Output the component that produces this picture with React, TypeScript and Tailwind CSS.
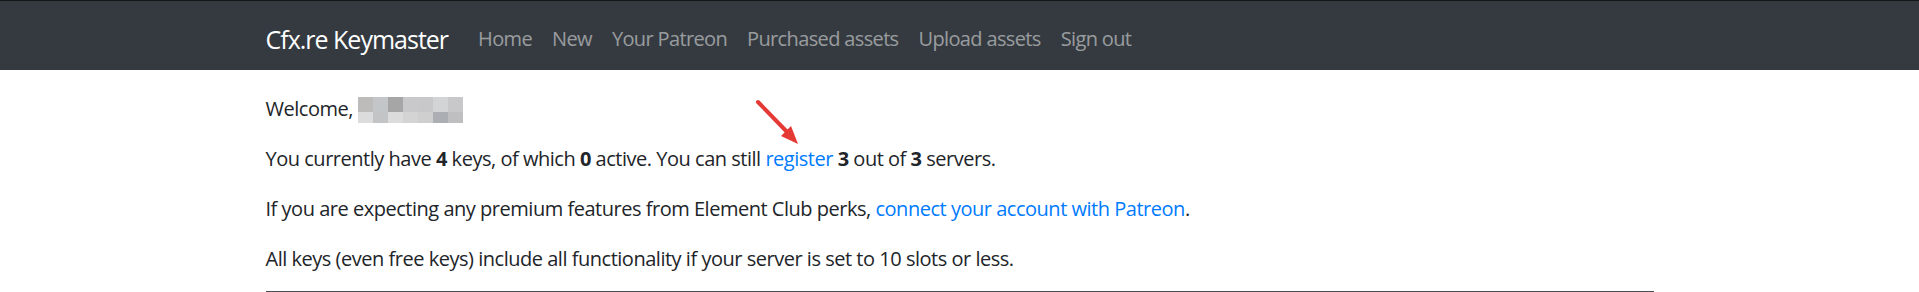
const navLinks = ['Home', 'New', 'Your Patreon', 'Purchased assets', 'Upload assets', 'Sign out']

// pixelated name block (2 rows x 7 cells)
const mosaicTop = ['bg-[#bdbcbb]', 'bg-[#c3c6c9]', 'bg-[#a6a6a6]', 'bg-[#c9c9cb]', 'bg-[#c8c8ca]', 'bg-[#d3d4d6]', 'bg-[#c8c8ca]']
const mosaicBottom = ['bg-[#dcdcdc]', 'bg-[#c2c4c6]', 'bg-[#dcdcdc]', 'bg-[#d4d4d4]', 'bg-[#cfcfcf]', 'bg-[#abaeb2]', 'bg-[#bfbfc1]']

function RedactedName() {
  return (
    <span className="inline-block relative w-[105px] h-px">
      <span className="absolute left-0 top-[-18px] flex flex-col w-[105px]">
        <span className="flex h-[15px]">
          {mosaicTop.map((c, i) => (
            <span key={i} className={`w-[15px] h-full ${c}`} />
          ))}
        </span>
        <span className="flex h-[11px]">
          {mosaicBottom.map((c, i) => (
            <span key={i} className={`w-[15px] h-full ${c}`} />
          ))}
        </span>
      </span>
    </span>
  )
}

export default function App() {
  return (
    <div className="relative min-h-[292px] bg-white text-[#212529] font-['Open_Sans',sans-serif] tracking-[-0.03em] overflow-hidden">
      {/* Navbar */}
      <nav className="h-[70px] bg-[#343a40] border-t border-[#141618]">
        <div className="w-[1388px] mx-auto h-full pt-[8px] flex items-center">
          <a className="text-[25px] text-white mr-5 leading-none tracking-[-0.04em]">Cfx.re Keymaster</a>
          <ul className="flex items-center tracking-[-0.04em]">
            {navLinks.map((l) => (
              <li key={l}>
                <a className="px-[10px] text-[20px] text-white/50 leading-none">{l}</a>
              </li>
            ))}
          </ul>
        </div>
      </nav>

      {/* Main */}
      <main className="w-[1388px] mx-auto pt-[24px] text-[20px] leading-[30px]">
        <p className="mb-5">
          Welcome, <RedactedName />
        </p>
        <p className="mb-5">
          You currently have <b>4</b> keys, of which <b>0</b> active. You can still{' '}
          <a className="text-[#007bff]">register</a> <b>3</b> out of <b>3</b> servers.
        </p>
        <p className="mb-5">
          If you are expecting any premium features from Element Club perks,{' '}
          <a className="text-[#007bff]">connect your account with Patreon</a>.
        </p>
        <p className="mb-[17px]">
          All keys (even free keys) include all functionality if your server is set to 10 slots or less.
        </p>
        <hr className="border-0 border-t border-[#484b50]" />
      </main>

      {/* annotation arrow */}
      <svg className="absolute left-[750px] top-[94px] pointer-events-none" width="60" height="60" viewBox="0 0 60 60">
        <line x1="8" y1="8" x2="40" y2="41" stroke="#e53935" strokeWidth="4" strokeLinecap="round" />
        <polygon points="48,50 31,42 41,32" fill="#e53935" />
      </svg>
    </div>
  )
}
